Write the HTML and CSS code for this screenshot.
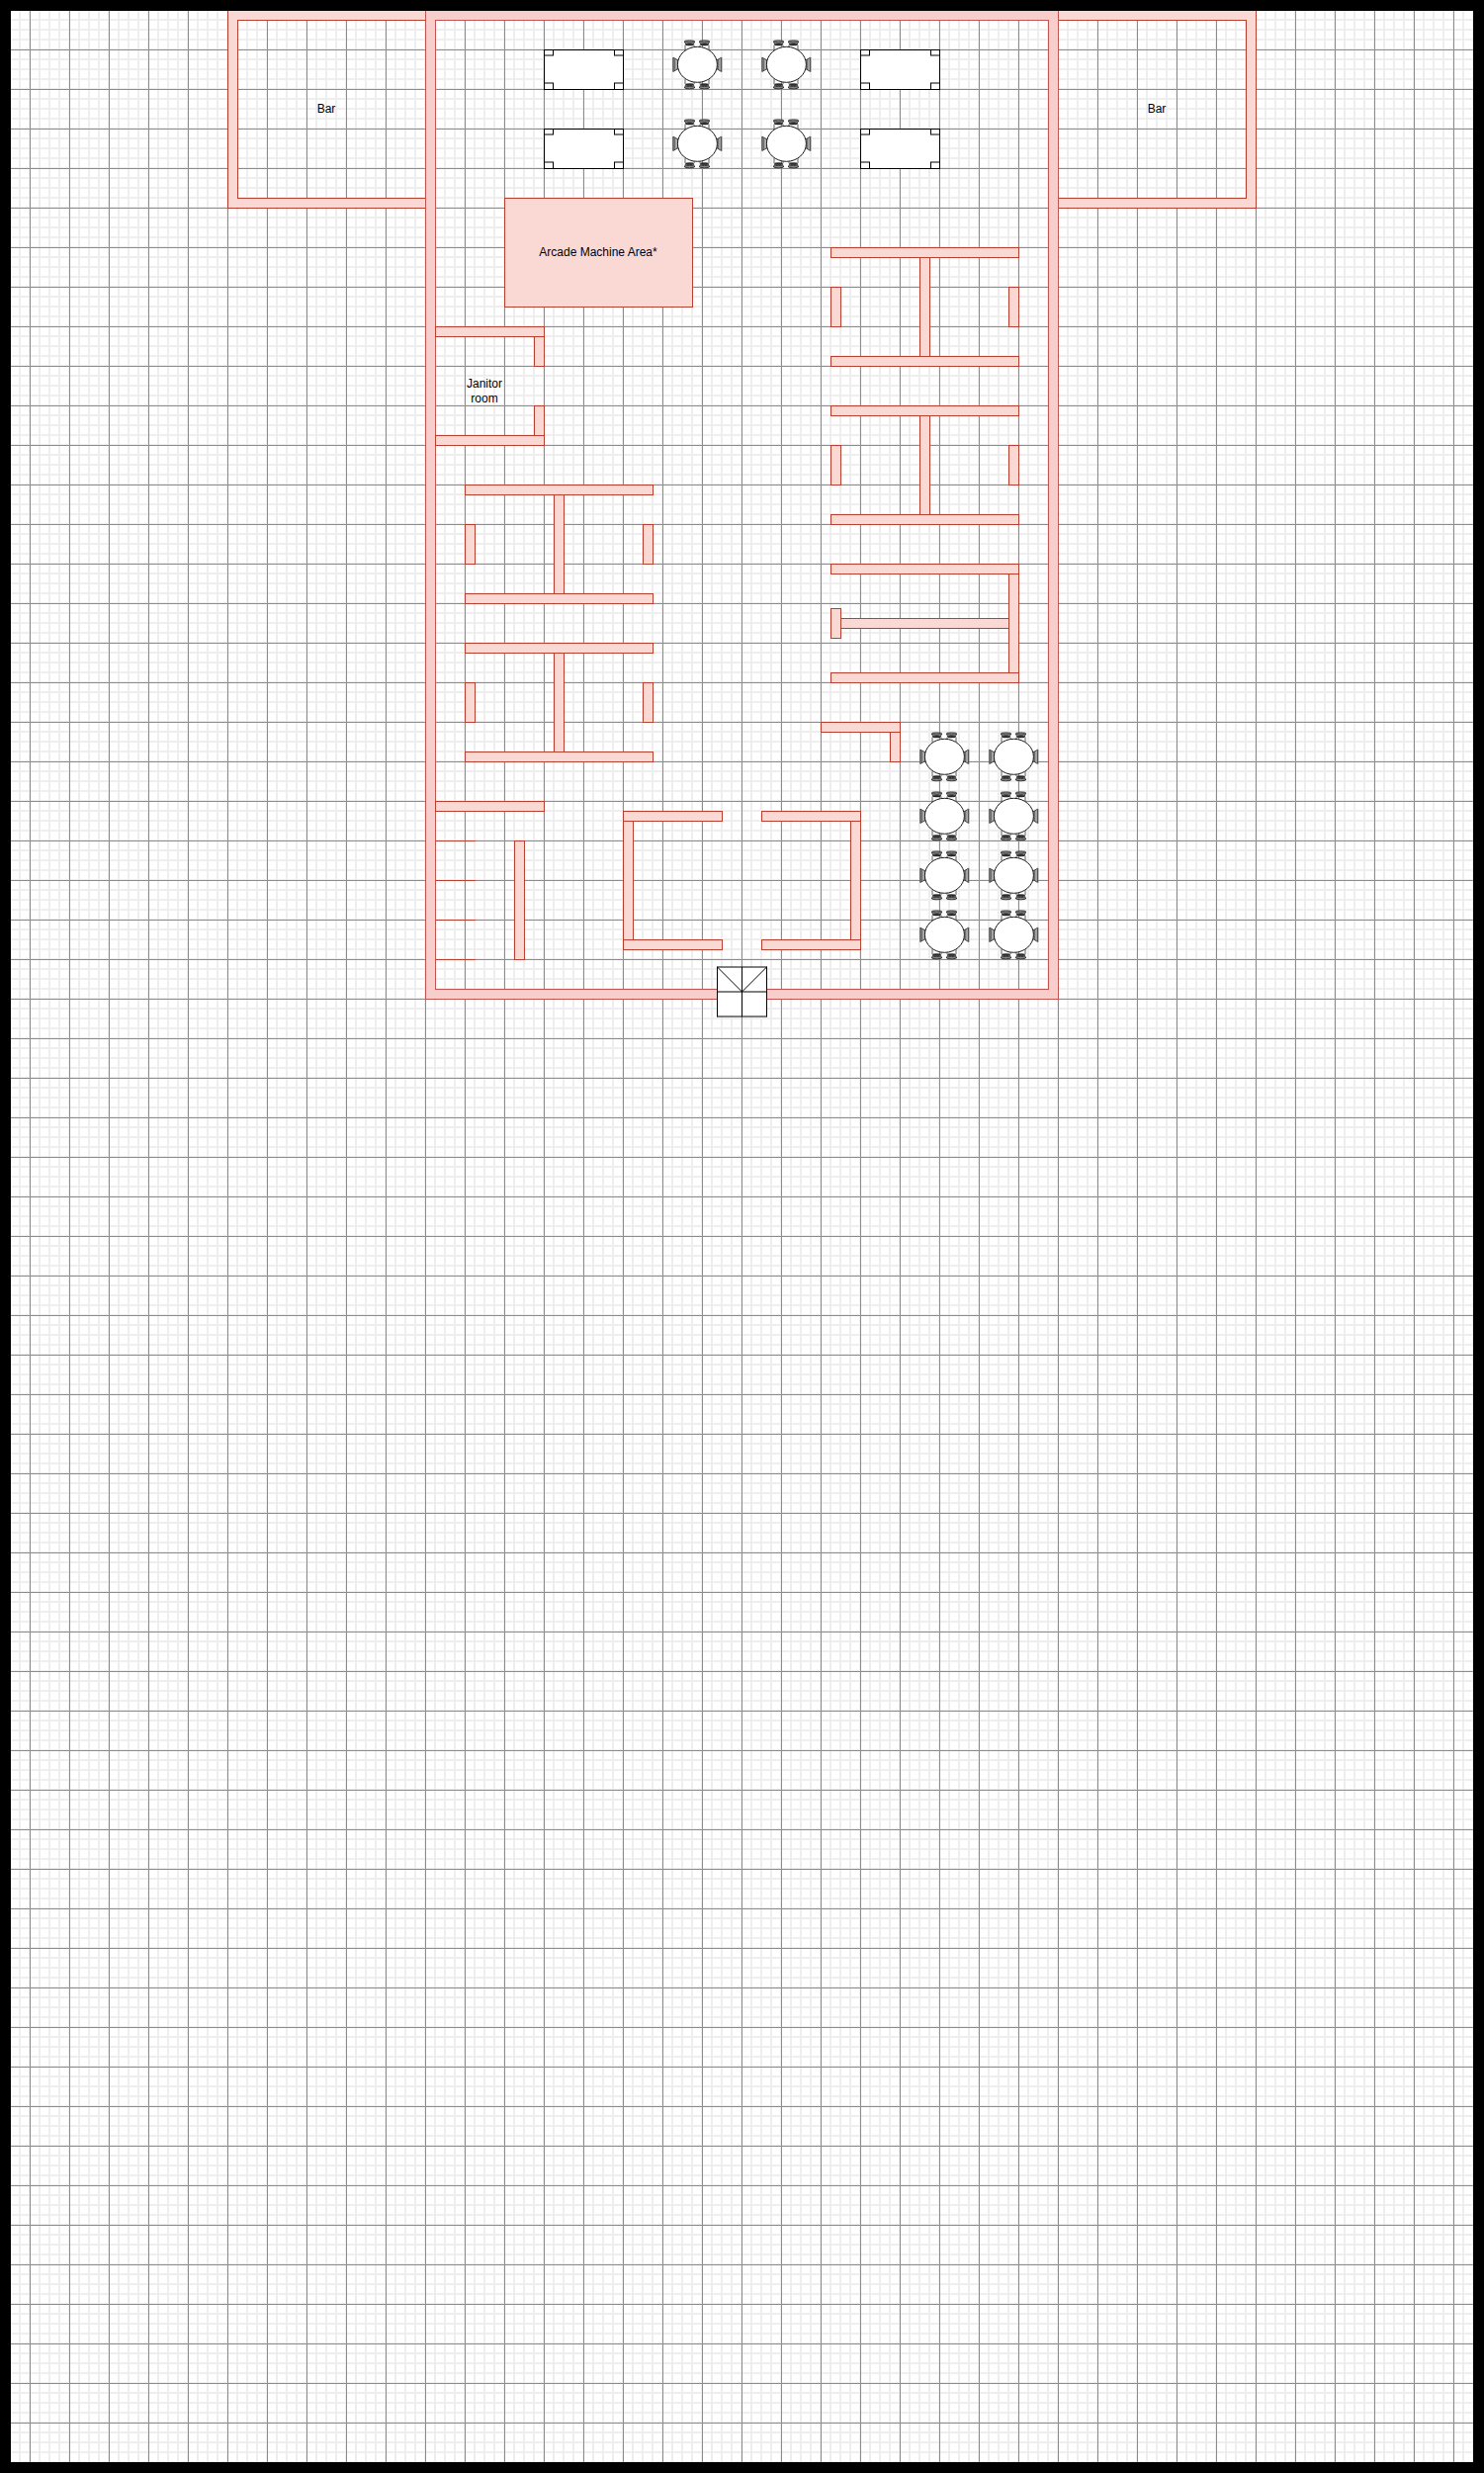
FILE: index.html
```html
<!DOCTYPE html>
<html lang="en">
<head>
<meta charset="utf-8">
<title>Floor plan</title>
<link rel="stylesheet" href="styles.css">
</head>
<body>
<main class="canvas">
<svg class="plan" width="1479" height="2479" viewBox="11 11 1479 2479" xmlns="http://www.w3.org/2000/svg">
  <defs>
    <g id="chair-top">
      <path class="chair-leg" d="M-4.5 5V10M4.5 5V10"/>
      <path class="chair-seat" d="M-5 1.6L-3.6 5H3.6L5 1.6Z"/>
      <ellipse class="chair-rim" cx="0" cy="1.6" rx="5.2" ry="1.2"/>
      <ellipse class="chair-dark" cx="0" cy="4.4" rx="3.8" ry="1"/>
    </g>
    <g id="chair-side">
      <path class="chair-seat" d="M1.2 -7L5.5 -4.5V4.5L1.2 7Z"/>
      <path class="chair-line" d="M2.6 -6V6M4 -5.2V5.2"/>
      <rect class="chair-side-back" x="0.3" y="-7.4" width="1" height="14.8"/>
      <path class="chair-leg" d="M5.5 -4.5L7 -6M5.5 4.5L7 6"/>
    </g>
    <g id="round-table">
      <use href="#chair-top" transform="translate(17.5 0.5)"/>
      <use href="#chair-top" transform="translate(32.5 0.5)"/>
      <use href="#chair-top" transform="translate(17.5 50.2) scale(1 -1)"/>
      <use href="#chair-top" transform="translate(32.5 50.2) scale(1 -1)"/>
      <use href="#chair-side" transform="translate(0 25.3)"/>
      <use href="#chair-side" transform="translate(50.6 25.3) scale(-1 1)"/>
      <ellipse class="table-top" cx="25.4" cy="25.3" rx="20" ry="18"/>
    </g>
    <g id="long-table">
      <rect class="table-edge" x="0.5" y="0.5" width="80" height="40"/>
      <rect class="table-corner" x="0.5" y="0.5" width="9" height="5.5"/>
      <rect class="table-corner" x="71.5" y="0.5" width="9" height="5.5"/>
      <rect class="table-corner" x="0.5" y="34" width="9" height="6.5"/>
      <rect class="table-corner" x="71.5" y="34" width="9" height="6.5"/>
      <rect class="table-outline" x="0.5" y="0.5" width="80" height="40"/>
    </g>
  </defs>

  <g transform="translate(.5 .5)">
    <path class="wall" d="M430 10H230V210H430V200H240V20H430Z"/>
    <path class="wall" d="M1070 10H1270V210H1070V200H1260V20H1070Z"/>
    <path class="wall-main" fill-rule="evenodd" d="M430 10H1070V1010H430ZM440 20V1000H1060V20Z"/>

    <rect class="wall" x="510" y="200" width="190" height="110"/>

    <rect class="wall" x="540" y="340" width="10" height="30"/>
    <rect class="wall" x="540" y="410" width="10" height="30"/>
    <rect class="wall" x="440" y="330" width="110" height="10"/>
    <rect class="wall" x="440" y="440" width="110" height="10"/>

    <rect class="wall" x="560" y="500" width="10" height="100"/>
    <rect class="wall" x="470" y="530" width="10" height="40"/>
    <rect class="wall" x="650" y="530" width="10" height="40"/>
    <rect class="wall" x="470" y="490" width="190" height="10"/>
    <rect class="wall" x="470" y="600" width="190" height="10"/>

    <rect class="wall" x="560" y="660" width="10" height="100"/>
    <rect class="wall" x="470" y="690" width="10" height="40"/>
    <rect class="wall" x="650" y="690" width="10" height="40"/>
    <rect class="wall" x="470" y="650" width="190" height="10"/>
    <rect class="wall" x="470" y="760" width="190" height="10"/>

    <rect class="wall" x="440" y="810" width="110" height="10"/>
    <path class="rule" d="M440 850H480M440 890H480M440 930H480M440 970H480"/>
    <rect class="wall" x="520" y="850" width="10" height="120"/>

    <rect class="wall" x="630" y="830" width="10" height="120"/>
    <rect class="wall" x="630" y="820" width="100" height="10"/>
    <rect class="wall" x="630" y="950" width="100" height="10"/>
    <rect class="wall" x="860" y="830" width="10" height="120"/>
    <rect class="wall" x="770" y="820" width="100" height="10"/>
    <rect class="wall" x="770" y="950" width="100" height="10"/>

    <rect class="wall" x="930" y="260" width="10" height="100"/>
    <rect class="wall" x="840" y="290" width="10" height="40"/>
    <rect class="wall" x="1020" y="290" width="10" height="40"/>
    <rect class="wall" x="840" y="250" width="190" height="10"/>
    <rect class="wall" x="840" y="360" width="190" height="10"/>

    <rect class="wall" x="930" y="420" width="10" height="100"/>
    <rect class="wall" x="840" y="450" width="10" height="40"/>
    <rect class="wall" x="1020" y="450" width="10" height="40"/>
    <rect class="wall" x="840" y="410" width="190" height="10"/>
    <rect class="wall" x="840" y="520" width="190" height="10"/>

    <rect class="wall" x="850" y="625" width="170" height="10"/>
    <rect class="wall" x="840" y="615" width="10" height="30"/>
    <rect class="wall" x="1020" y="580" width="10" height="100"/>
    <rect class="wall" x="840" y="570" width="190" height="10"/>
    <rect class="wall" x="840" y="680" width="190" height="10"/>

    <rect class="wall" x="900" y="740" width="10" height="30"/>
    <rect class="wall" x="830" y="730" width="80" height="10"/>
  </g>

  <use href="#long-table" x="550" y="50"/>
  <use href="#long-table" x="550" y="130"/>
  <use href="#long-table" x="870" y="50"/>
  <use href="#long-table" x="870" y="130"/>

  <use href="#round-table" x="680" y="40"/>
  <use href="#round-table" x="770" y="40"/>
  <use href="#round-table" x="680" y="120"/>
  <use href="#round-table" x="770" y="120"/>
  <use href="#round-table" x="930" y="740"/>
  <use href="#round-table" x="1000" y="740"/>
  <use href="#round-table" x="930" y="800"/>
  <use href="#round-table" x="1000" y="800"/>
  <use href="#round-table" x="930" y="860"/>
  <use href="#round-table" x="1000" y="860"/>
  <use href="#round-table" x="930" y="920"/>
  <use href="#round-table" x="1000" y="920"/>

  <g>
    <rect class="door-fill" x="725.5" y="978" width="50" height="50"/>
    <path class="door-line" d="M725.5 978L750.5 1003L775.5 978M725.5 1003H775.5M725.5 978H775.5M725.5 1028H775.5M725.5 977.5V1028.5M750.5 978V1028M775.5 977.5V1028.5"/>
  </g>

  <text class="label" x="330" y="114">Bar</text>
  <text class="label" x="1170" y="114">Bar</text>
  <text class="label" x="605" y="259">Arcade Machine Area*</text>
  <text class="label" x="490" y="392">Janitor</text>
  <text class="label" x="490" y="407">room</text>
</svg>
</main>
</body>
</html>
```
FILE: styles.css
```css
html, body {
  margin: 0;
  padding: 0;
  background: #000;
}

body {
  padding: 11px;
  width: 1479px;
  height: 2479px;
  overflow: hidden;
}

.canvas {
  width: 1479px;
  height: 2479px;
  background-color: #fff;
  background-image:
    linear-gradient(to right, #8c8c8c 1px, transparent 1px),
    linear-gradient(to bottom, #8c8c8c 1px, transparent 1px),
    linear-gradient(to right, #eeeeee 2px, transparent 2px),
    linear-gradient(to bottom, #eeeeee 2px, transparent 2px);
  background-size: 40px 40px, 40px 40px, 10px 10px, 10px 10px;
  background-position: 19px 0, 0 39px, 8px 0, 0 8px;
}

.plan {
  display: block;
}

.wall {
  fill: #fad9d5;
  stroke: #b84030;
  stroke-width: 1;
  shape-rendering: crispEdges;
}

.wall-main {
  fill: #f8cecc;
  stroke: #c05450;
  stroke-width: 1;
  shape-rendering: crispEdges;
}

.rule {
  fill: none;
  stroke: #b84030;
  stroke-width: 1;
  shape-rendering: crispEdges;
}

.table-edge {
  fill: #fff;
  stroke: none;
}

.table-outline {
  fill: none;
  stroke: #000;
  stroke-width: 1;
}

.table-corner {
  fill: #fff;
  stroke: #000;
  stroke-width: 1;
}

.table-top {
  fill: #fff;
  stroke: #1a1a1a;
  stroke-width: 1;
}

.chair-seat {
  fill: #fff;
  stroke: #1a1a1a;
  stroke-width: 0.8;
}

.chair-rim {
  fill: #888;
  stroke: #1a1a1a;
  stroke-width: 0.8;
}

.chair-dark {
  fill: #333;
  stroke: #1a1a1a;
  stroke-width: 0.7;
}

.chair-side-back {
  fill: #555;
  stroke: none;
}

.chair-leg,
.chair-line {
  fill: none;
  stroke: #1a1a1a;
  stroke-width: 0.7;
}

.door-fill {
  fill: #fff;
}

.door-line {
  fill: none;
  stroke: #000;
  stroke-width: 1;
}

.label {
  font-family: "Liberation Sans", Arial, sans-serif;
  font-size: 12px;
  fill: #000;
  text-anchor: middle;
}
```
